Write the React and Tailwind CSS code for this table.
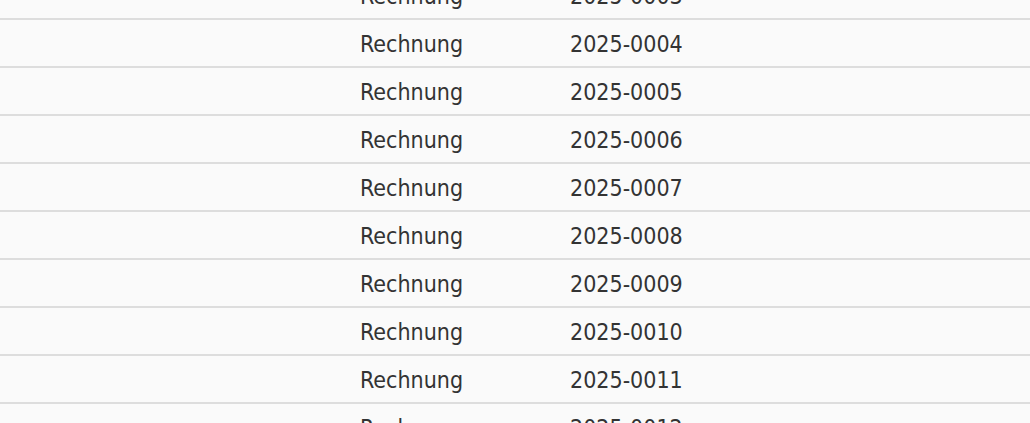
import React from 'react';

const rows = [3, 4, 5, 6, 7, 8, 9, 10, 11, 12];

const App = () => {
  return (
    <div className="h-[423px] overflow-hidden bg-[#fafafa] font-['DejaVu_Sans_Condensed','DejaVu_Sans',sans-serif] text-[23px] text-[#333]">
      <div className="-mt-[28px]">
        {rows.map((n) => (
          <div
            key={n}
            className="grid h-[48px] grid-cols-[360px_210px_1fr] items-center border-b-2 border-[#dddddd] pt-[2px]"
          >
            <div></div>
            <div>Rechnung</div>
            <div>{`2025-${String(n).padStart(4, '0')}`}</div>
          </div>
        ))}
      </div>
    </div>
  );
};

export default App;
